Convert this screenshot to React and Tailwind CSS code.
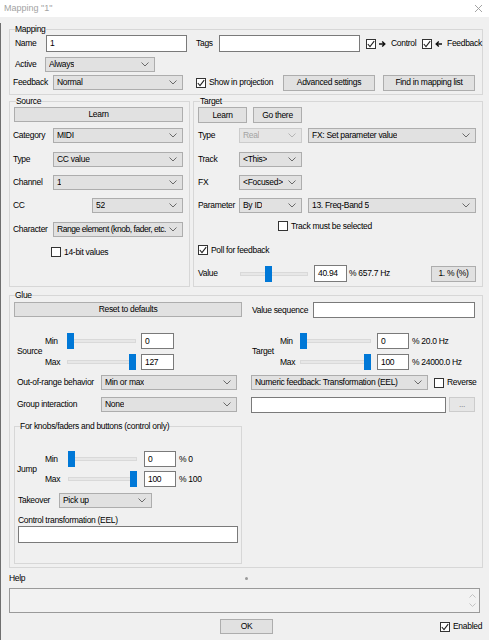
import React from 'react';

// Win32-style dialog controls, sized to the dialog's small UI font

function Chevron({ light }) {
  return (
    <svg width="8" height="5" viewBox="0 0 8 5" className="shrink-0">
      <path d="M0.5 0.5 L4 4 L7.5 0.5" fill="none" stroke={light ? '#b5b5b5' : '#6a6a6a'} strokeWidth="1" />
    </svg>
  );
}

function Select({ value, className = '', text = '', disabled }) {
  return (
    <div
      className={`flex h-[15px] shrink-0 items-center justify-between border pl-[3px] pr-[5px] ${
        disabled ? 'border-[#cccccc] bg-[#e5e5e5] text-[#a3a3a3]' : 'border-[#adadad] bg-[#e1e1e1]'
      } ${className}`}
    >
      <span className={`overflow-hidden ${text}`}>{value}</span>
      <Chevron light={disabled} />
    </div>
  );
}

function Field({ value = '', className = '' }) {
  return (
    <div className={`flex h-[16px] shrink-0 items-center border border-[#7a7a7a] bg-white pl-[3px] ${className}`}>
      {value}
    </div>
  );
}

function Btn({ children, className = '' }) {
  return (
    <button
      type="button"
      className={`flex h-[15px] shrink-0 items-center justify-center border border-[#adadad] bg-[#e1e1e1] ${className}`}
    >
      {children}
    </button>
  );
}

function Check({ checked, children, className = '' }) {
  return (
    <label className={`flex shrink-0 items-center gap-[3px] ${className}`}>
      <span className="flex h-[10px] w-[10px] items-center justify-center border border-[#333333] bg-white">
        {checked && (
          <svg width="8" height="8" viewBox="0 0 8 8">
            <path d="M0.8 4 L3 6.6 L7.2 1.2" fill="none" stroke="#222222" strokeWidth="1.1" />
          </svg>
        )}
      </span>
      {children}
    </label>
  );
}

function Slider({ value, max = 100, width, className = '' }) {
  const left = Math.round((value / max) * (width - 7));
  return (
    <div className={`relative h-[16px] shrink-0 ${className}`}>
      <div className="absolute left-0 right-0 top-[6px] h-[4px] border border-[#d9d9d9] bg-[#e7e7e7]" />
      <div className="absolute top-0 h-[16px] w-[7px] bg-[#0078d7]" style={{ left }} />
    </div>
  );
}

function Group({ title, className = '', legend = 'ml-[5px]', children }) {
  return (
    <fieldset className={`min-w-0 shrink-0 border border-[#d7d7d7] ${className}`}>
      <legend className={`leading-[12px] ${legend}`}>{title}</legend>
      {children}
    </fieldset>
  );
}

function MinMax({ min, max, range = 127, labelW, sliderW, slider, gap, field, fieldW, unit }) {
  const rows = [
    ['Min', min, unit?.[0]],
    ['Max', max, unit?.[1]],
  ];
  return (
    <div className={`flex flex-col ${gap}`}>
      {rows.map(([label, v, u]) => (
        <div key={label} className="flex h-[16px] items-center">
          <span className={labelW}>{label}</span>
          <Slider value={v} max={range} width={sliderW} className={slider} />
          <Field value={String(v)} className={`${field} ${fieldW}`} />
          {u && <span className="ml-[3px]">{u}</span>}
        </div>
      ))}
    </div>
  );
}

const Arrow = ({ dir }) => (
  <svg width="7" height="6" viewBox="0 0 7 6" className="mr-[2px] shrink-0">
    {dir === 'right' ? (
      <path d="M0 3 H5.5 M3.2 0.6 L5.8 3 L3.2 5.4" fill="none" stroke="#111111" strokeWidth="1.4" />
    ) : (
      <path d="M7 3 H1.5 M3.8 0.6 L1.2 3 L3.8 5.4" fill="none" stroke="#111111" strokeWidth="1.4" />
    )}
  </svg>
);

export default function App() {
  return (
    <div className="relative h-[640px] w-[489px] overflow-hidden whitespace-nowrap bg-[#f0f0f0] font-['Liberation_Sans',Arial,sans-serif] text-[8.5px] leading-none tracking-[-0.3px] text-black">
      <div className="flex h-[17px] items-center justify-between bg-white pl-[4px] pr-[7px] text-[9px] tracking-normal text-[#a3a3a3]">
        <span>Mapping "1"</span>
        <svg width="7" height="7" viewBox="0 0 7 7">
          <path d="M0 0 L7 7 M7 0 L0 7" stroke="#9a9a9a" strokeWidth="0.9" />
        </svg>
      </div>

      <div className="h-[623px] border-l border-[#6f6f6f] pl-[8px]">
        {/* Mapping */}
        <Group title="Mapping" className="mt-[6px] h-[72px] w-[474px]">
          <div className="flex h-[17px] items-center pl-[5px]">
            <span className="w-[31px]">Name</span>
            <Field value="1" className="h-[17px] w-[141px]" />
            <span className="ml-[9px] w-[23px]">Tags</span>
            <Field className="h-[17px] w-[141px]" />
            <Check checked className="ml-[6px] w-[56px]">
              <Arrow dir="right" />
              Control
            </Check>
            <Check checked>
              <Arrow dir="left" />
              Feedback
            </Check>
          </div>
          <div className="mt-[5px] flex h-[15px] items-center pl-[5px]">
            <span className="w-[30px]">Active</span>
            <Select value="Always" className="w-[110px]" />
          </div>
          <div className="mt-[2px] flex h-[17px] items-center pl-[3px]">
            <span className="w-[40px]">Feedback</span>
            <Select value="Normal" className="w-[130px]" />
            <div className="w-[100px] pl-[13px]">
              <Check checked>Show in projection</Check>
            </div>
            <Btn className="h-[16px] w-[92px]">Advanced settings</Btn>
            <Btn className="ml-[8px] h-[16px] w-[92px]">Find in mapping list</Btn>
          </div>
        </Group>

        <div className="flex">
          {/* Source */}
          <Group title="Source" legend="ml-[6px]" className="h-[192px] w-[181px]">
            <Btn className="ml-[4px] w-[169px]">Learn</Btn>
            <div className="pl-[3px]">
              <div className="mt-[6px] flex h-[15px] items-center">
                <span className="w-[40px]">Category</span>
                <Select value="MIDI" className="w-[130px]" />
              </div>
              <div className="mt-[9px] flex h-[15px] items-center">
                <span className="w-[40px]">Type</span>
                <Select value="CC value" className="w-[130px]" />
              </div>
              <div className="mt-[8px] flex h-[15px] items-center">
                <span className="w-[40px]">Channel</span>
                <Select value="1" className="w-[130px]" />
              </div>
              <div className="mt-[8px] flex h-[15px] items-center">
                <span className="w-[79px]">CC</span>
                <Select value="52" className="w-[91px]" />
              </div>
              <div className="mt-[9px] flex h-[15px] items-center">
                <span className="w-[40px]">Character</span>
                <Select
                  value="Range element (knob, fader, etc."
                  text="tracking-[-0.45px]"
                  className="w-[130px] pr-[4px]"
                />
              </div>
            </div>
            <Check className="ml-[41px] mt-[10px]">14-bit values</Check>
          </Group>

          {/* Target */}
          <Group title="Target" legend="ml-[6px]" className="ml-[3px] h-[192px] w-[290px]">
            <div className="flex gap-[6px] pl-[4px]">
              <Btn className="h-[16px] w-[49px]">Learn</Btn>
              <Btn className="h-[16px] w-[49px]">Go there</Btn>
            </div>
            <div className="pl-[4px]">
              <div className="mt-[5px] flex h-[15px] items-center">
                <span className="w-[41px]">Type</span>
                <Select value="Real" disabled className="w-[63px]" />
                <Select value="FX: Set parameter value" className="ml-[6px] w-[168px]" />
              </div>
              <div className="mt-[9px] flex h-[15px] items-center">
                <span className="w-[41px]">Track</span>
                <Select value="<This>" className="w-[63px]" />
              </div>
              <div className="mt-[8px] flex h-[15px] items-center">
                <span className="w-[41px]">FX</span>
                <Select value="<Focused>" className="w-[63px]" />
              </div>
              <div className="mt-[8px] flex h-[15px] items-center">
                <span className="w-[41px]">Parameter</span>
                <Select value="By ID" className="w-[63px]" />
                <Select value="13. Freq-Band 5" className="ml-[6px] w-[168px]" />
              </div>
            </div>
            <Check className="ml-[84px] mt-[8px]">Track must be selected</Check>
            <Check checked className="ml-[4px] mt-[14px]">
              Poll for feedback
            </Check>
            <div className="mt-[10px] flex h-[17px] items-center pl-[4px] pr-[6px]">
              <span className="w-[42px]">Value</span>
              <Slider value={40.94} width={68} className="w-[68px]" />
              <Field value="40.94" className="ml-[6px] h-[17px] w-[33px]" />
              <span className="ml-[2px]">% 657.7 Hz</span>
              <Btn className="ml-auto h-[16px] w-[45px]">1. % (%)</Btn>
            </div>
          </Group>
        </div>

        {/* Glue */}
        <Group title="Glue" className="mt-[2px] h-[279px] w-[474px]">
          <div className="mt-[1px] grid grid-cols-[241px_1fr]">
            <Btn className="ml-[4px] w-[228px]">Reset to defaults</Btn>
            <div className="flex items-center">
              <span className="ml-[1px] w-[61px]">Value sequence</span>
              <Field className="w-[162px]" />
            </div>

            <div className="mt-[15px] flex items-center">
              <span className="w-[35px] pl-[7px]">Source</span>
              <MinMax
                min={0}
                max={127}
                range={127}
                labelW="w-[22px]"
                sliderW={69}
                slider="w-[69px]"
                gap="gap-[5px]"
                field="ml-[5px]"
                fieldW="w-[33px]"
              />
            </div>
            <div className="mt-[15px] flex items-center">
              <span className="ml-[1px] w-[28px]">Target</span>
              <MinMax
                min={0}
                max={100}
                range={100}
                labelW="w-[20px]"
                sliderW={71}
                slider="w-[71px]"
                gap="gap-[5px]"
                field="ml-[6px]"
                fieldW="w-[32px]"
                unit={['% 20.0 Hz', '% 24000.0 Hz']}
              />
            </div>

            <div className="mt-[5px] flex h-[15px] items-center pl-[7px]">
              <span className="w-[84px]">Out-of-range behavior</span>
              <Select value="Min or max" className="w-[136px]" />
            </div>
            <div className="mt-[5px] flex h-[15px] items-center">
              <Select value="Numeric feedback: Transformation (EEL)" className="w-[177px]" />
              <Check className="ml-[6px]">Reverse</Check>
            </div>

            <div className="mt-[7px] flex h-[15px] items-center pl-[7px]">
              <span className="w-[84px]">Group interaction</span>
              <Select value="None" className="w-[136px]" />
            </div>
            <div className="mt-[7px] flex h-[15px] items-center">
              <Field className="w-[195px]" />
              <button
                type="button"
                className="ml-[3px] flex h-[15px] w-[26px] items-center justify-center border border-[#cccccc] bg-[#e6e6e6] text-[#8a8a8a]"
              >
                ...
              </button>
            </div>
          </div>

          <Group
            title="For knobs/faders and buttons (control only)"
            className="ml-[4px] mt-[8px] h-[144px] w-[228px]"
          >
            <div className="mt-[19px] flex items-center pl-[2px]">
              <span className="w-[28px]">Jump</span>
              <MinMax
                min={0}
                max={100}
                range={100}
                labelW="w-[23px]"
                sliderW={69}
                slider="w-[69px]"
                gap="gap-[4px]"
                field="ml-[7px]"
                fieldW="w-[32px]"
                unit={['% 0', '% 100']}
              />
            </div>
            <div className="mt-[6px] flex h-[15px] items-center pl-[3px]">
              <span className="w-[41px]">Takeover</span>
              <Select value="Pick up" className="w-[93px]" />
            </div>
            <div className="mt-[6px] flex h-[12px] items-center pl-[3px]">Control transformation (EEL)</div>
            <Field className="ml-[3px] h-[17px] w-[220px]" />
          </Group>
        </Group>

        {/* Help + footer */}
        <div className="mt-[4px] flex h-[12px] items-center">
          <span className="w-[236px]">Help</span>
          <span className="h-[3px] w-[3px] rounded-full bg-[#9a9a9a]" />
        </div>
        <div className="mt-[4px] flex h-[25px] w-[471px] justify-end border border-[#9a9a9a] bg-[#f2f2f2] pr-[3px]">
          <div className="flex flex-col justify-center gap-[5px]">
            <svg width="7" height="4" viewBox="0 0 7 4">
              <path d="M0.5 3.5 L3.5 0.5 L6.5 3.5" fill="none" stroke="#c2c2c2" strokeWidth="1" />
            </svg>
            <svg width="7" height="4" viewBox="0 0 7 4">
              <path d="M0.5 0.5 L3.5 3.5 L6.5 0.5" fill="none" stroke="#c2c2c2" strokeWidth="1" />
            </svg>
          </div>
        </div>
        <div className="mt-[6px] flex h-[15px] items-center">
          <Btn className="ml-[211px] w-[53px]">OK</Btn>
          <Check checked className="ml-[167px]">
            Enabled
          </Check>
        </div>
      </div>
    </div>
  );
}
